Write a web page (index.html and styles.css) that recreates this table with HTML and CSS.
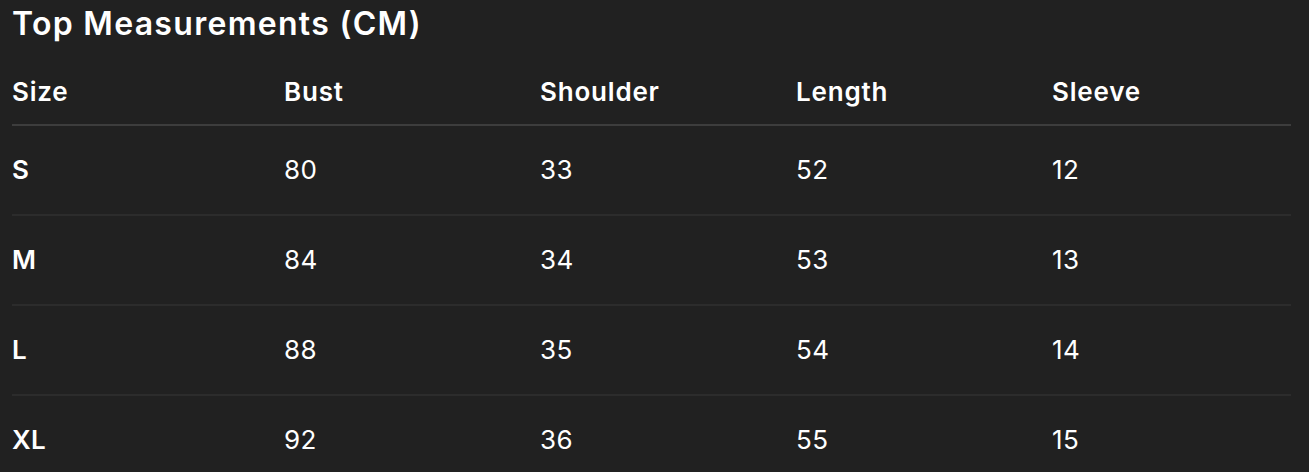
FILE: index.html
```html
<!DOCTYPE html>
<html lang="en">
<head>
<meta charset="utf-8">
<title>Top Measurements (CM)</title>
<link rel="stylesheet" href="styles.css">
</head>
<body>
<main class="page">
  <h1 class="title">Top Measurements (CM)</h1>
  <div class="table">
    <div class="row head">
      <div class="cell">Size</div>
      <div class="cell">Bust</div>
      <div class="cell">Shoulder</div>
      <div class="cell">Length</div>
      <div class="cell">Sleeve</div>
    </div>
    <div class="row">
      <div class="cell size">S</div>
      <div class="cell">80</div>
      <div class="cell">33</div>
      <div class="cell">52</div>
      <div class="cell">12</div>
    </div>
    <div class="row">
      <div class="cell size">M</div>
      <div class="cell">84</div>
      <div class="cell">34</div>
      <div class="cell">53</div>
      <div class="cell">13</div>
    </div>
    <div class="row">
      <div class="cell size">L</div>
      <div class="cell">88</div>
      <div class="cell">35</div>
      <div class="cell">54</div>
      <div class="cell">14</div>
    </div>
    <div class="row">
      <div class="cell size">XL</div>
      <div class="cell">92</div>
      <div class="cell">36</div>
      <div class="cell">55</div>
      <div class="cell">15</div>
    </div>
  </div>
</main>
</body>
</html>
```

FILE: styles.css
```css
html, body {
  margin: 0;
  padding: 0;
  background: #212121;
}
body {
  font-family: Inter, "Liberation Sans", sans-serif;
  color: #ffffff;
  overflow: hidden;
}
.page {
  padding: 0 18px 0 12px;
}
.title {
  margin: 0;
  font-size: 32px;
  font-weight: 600;
  line-height: 48px;
  letter-spacing: 1.3px;
}
.table {
  display: flex;
  flex-direction: column;
}
.row {
  display: grid;
  grid-template-columns: 272px 256px 256px 256px 1fr;
  padding: 28px 0;
  border-bottom: 2px solid #2c2c2c;
  font-size: 26px;
  line-height: 32px;
  letter-spacing: 0.4px;
}
.row.head {
  padding: 28px 0 16px;
  border-bottom: 2px solid #3d3d3d;
  font-weight: 600;
  letter-spacing: 0.8px;
}
.cell.size {
  font-weight: 600;
}
.row:last-child {
  border-bottom: none;
}
```
